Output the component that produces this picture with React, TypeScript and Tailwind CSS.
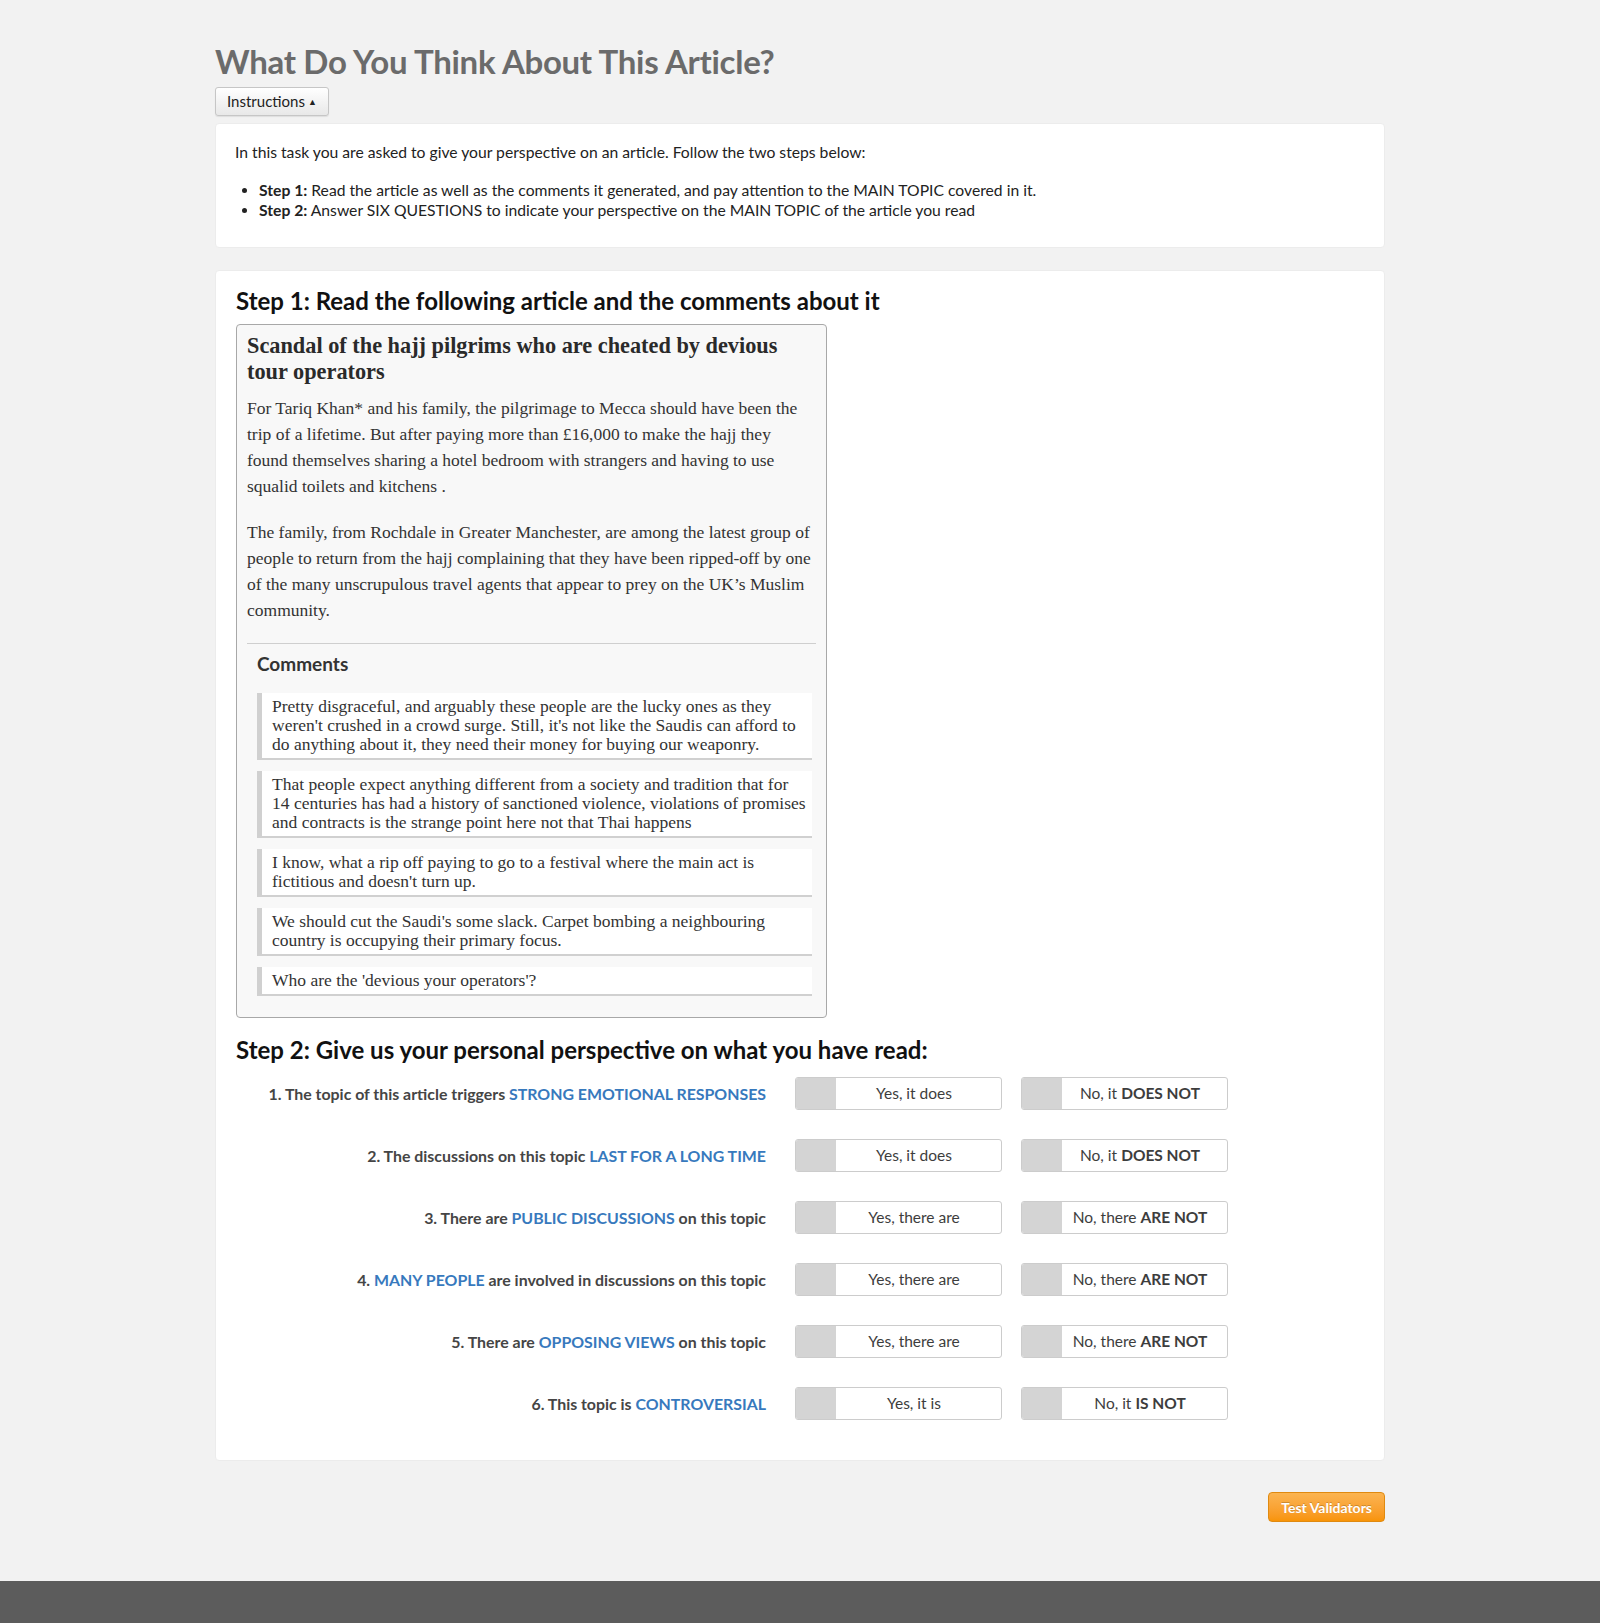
import React from "react";

const ui = { fontFamily: "Lato, 'Open Sans', sans-serif" };
const serif = { fontFamily: "'Liberation Serif', 'DejaVu Serif', serif" };

const comments: string[][] = [
  [
    "Pretty disgraceful, and arguably these people are the lucky ones as they",
    "weren't crushed in a crowd surge. Still, it's not like the Saudis can afford to",
    "do anything about it, they need their money for buying our weaponry.",
  ],
  [
    "That people expect anything different from a society and tradition that for",
    "14 centuries has had a history of sanctioned violence, violations of promises",
    "and contracts is the strange point here not that Thai happens",
  ],
  [
    "I know, what a rip off paying to go to a festival where the main act is",
    "fictitious and doesn't turn up.",
  ],
  [
    "We should cut the Saudi's some slack. Carpet bombing a neighbouring",
    "country is occupying their primary focus.",
  ],
  ["Who are the 'devious your operators'?"],
];

type Question = {
  pre: string;
  hl: string;
  post: string;
  yes: string;
  noPre: string;
  noBold: string;
};

const questions: Question[] = [
  { pre: "1. The topic of this article triggers ", hl: "STRONG EMOTIONAL RESPONSES", post: "", yes: "Yes, it does", noPre: "No, it ", noBold: "DOES NOT" },
  { pre: "2. The discussions on this topic ", hl: "LAST FOR A LONG TIME", post: "", yes: "Yes, it does", noPre: "No, it ", noBold: "DOES NOT" },
  { pre: "3. There are ", hl: "PUBLIC DISCUSSIONS", post: " on this topic", yes: "Yes, there are", noPre: "No, there ", noBold: "ARE NOT" },
  { pre: "4. ", hl: "MANY PEOPLE", post: " are involved in discussions on this topic", yes: "Yes, there are", noPre: "No, there ", noBold: "ARE NOT" },
  { pre: "5. There are ", hl: "OPPOSING VIEWS", post: " on this topic", yes: "Yes, there are", noPre: "No, there ", noBold: "ARE NOT" },
  { pre: "6. This topic is ", hl: "CONTROVERSIAL", post: "", yes: "Yes, it is", noPre: "No, it ", noBold: "IS NOT" },
];

function Lines({ lines }: { lines: string[] }) {
  return (
    <>
      {lines.map((l, i) => (
        <span key={i} className="block whitespace-nowrap">
          {l}
        </span>
      ))}
    </>
  );
}

function Choice({ children }: { children: React.ReactNode }) {
  return (
    <button className="flex h-[33px] w-[207px] overflow-hidden rounded-[3px] border border-[#cccccc] bg-white text-[15.5px] text-[#3d3d3d]">
      <span className="h-full w-[40px] shrink-0 bg-[#d4d4d4]" />
      <span className="flex flex-1 items-center justify-center pr-[9px]">{children}</span>
    </button>
  );
}

export default function App() {
  return (
    <div className="flex min-h-[1623px] flex-col bg-[#f2f2f2]" style={ui}>
      <div className="mx-auto w-[1170px] flex-1 pb-[59px]">
        <h1 className="pt-[40px] text-[33px] font-bold leading-[42px] tracking-[-0.3px] text-[#6b6b6b]">
          What Do You Think About This Article?
        </h1>
        <button className="mt-[5px] flex h-[29px] items-center gap-[3px] rounded-[3px] border border-[#c6c6c6] bg-gradient-to-b from-white to-[#e8e8e8] px-[11px] text-[15px] text-[#222] shadow-[0_1px_1px_rgba(0,0,0,0.08)]">
          Instructions
          <span className="text-[9px] leading-none">▲</span>
        </button>

        <div className="mt-[7px] rounded-[4px] border border-[#ececec] bg-white px-[19px] pb-[27px] pt-[18px] text-[15.7px] leading-[20px] text-[#222]">
          <p>In this task you are asked to give your perspective on an article. Follow the two steps below:</p>
          <ul className="mt-[18px] list-disc pl-[24px]">
            <li>
              <b>Step 1:</b> Read the article as well as the comments it generated, and pay attention to the MAIN TOPIC covered in it.
            </li>
            <li>
              <b>Step 2:</b> Answer SIX QUESTIONS to indicate your perspective on the MAIN TOPIC of the article you read
            </li>
          </ul>
        </div>

        <div className="mt-[22px] rounded-[4px] border border-[#ececec] bg-white px-[20px] pb-[40px] pt-[15px]">
          <h2 className="text-[24px] font-bold leading-[30px] text-[#111]">
            Step 1: Read the following article and the comments about it
          </h2>

          <div className="mt-[8px] w-[591px] rounded-[4px] border border-[#a8a8a8] bg-[#f8f8f8] px-[10px] pb-[21px] pt-[8px] text-[#333]" style={serif}>
            <h3 className="text-[22.3px] font-bold leading-[26px] text-[#2a2a2a]">
              <Lines lines={["Scandal of the hajj pilgrims who are cheated by devious", "tour operators"]} />
            </h3>
            <p className="mt-[10px] text-[17.5px] leading-[26px]">
              <Lines
                lines={[
                  "For Tariq Khan* and his family, the pilgrimage to Mecca should have been the",
                  "trip of a lifetime. But after paying more than £16,000 to make the hajj they",
                  "found themselves sharing a hotel bedroom with strangers and having to use",
                  "squalid toilets and kitchens .",
                ]}
              />
            </p>
            <p className="mt-[20px] text-[17.5px] leading-[26px]">
              <Lines
                lines={[
                  "The family, from Rochdale in Greater Manchester, are among the latest group of",
                  "people to return from the hajj complaining that they have been ripped-off by one",
                  "of the many unscrupulous travel agents that appear to prey on the UK’s Muslim",
                  "community.",
                ]}
              />
            </p>
            <div className="mt-[20px] border-t border-[#cfcfcf] pl-[10px] pr-[4px] pt-[8px]">
              <h4 className="text-[19px] font-bold leading-[24px] text-[#333]" style={ui}>
                Comments
              </h4>
              <div className="mt-[17px] flex flex-col gap-[11px]">
                {comments.map((c, i) => (
                  <blockquote
                    key={i}
                    className="border-b-2 border-l-[5px] border-[#d0d0d0] bg-white py-[4px] pl-[10px] text-[17.5px] leading-[19px] text-[#333]"
                  >
                    <Lines lines={c} />
                  </blockquote>
                ))}
              </div>
            </div>
          </div>

          <h2 className="mt-[17px] text-[24px] font-bold leading-[30px] text-[#111]">
            Step 2: Give us your personal perspective on what you have read:
          </h2>

          <div className="mt-[12px] flex flex-col gap-[29px]">
            {questions.map((q, i) => (
              <div key={i} className="flex items-center">
                <div className="w-[530px] text-right text-[15.9px] font-bold text-[#454545]">
                  {q.pre}
                  <span className="text-[#3779bd]">{q.hl}</span>
                  {q.post}
                </div>
                <div className="ml-[29px] flex gap-[19px]">
                  <Choice>{q.yes}</Choice>
                  <Choice>
                    {q.noPre}
                    <b className="ml-[4px]">{q.noBold}</b>
                  </Choice>
                </div>
              </div>
            ))}
          </div>
        </div>

        <div className="mt-[31px] flex justify-end">
          <button className="h-[30px] rounded-[4px] border border-[#e08a10] bg-gradient-to-b from-[#fbb450] to-[#f89406] px-[12px] text-[14px] font-bold text-white [text-shadow:0_-1px_0_rgba(0,0,0,0.2)]">
            Test Validators
          </button>
        </div>
      </div>
      <div className="h-[42px] bg-[#5c5c5c]" />
    </div>
  );
}
